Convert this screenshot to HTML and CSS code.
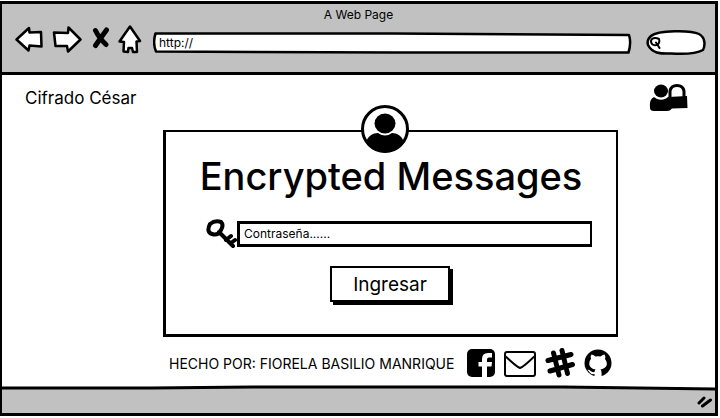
FILE: index.html
```html
<!DOCTYPE html>
<html lang="es">
<head>
<meta charset="utf-8">
<meta name="viewport" content="width=device-width, initial-scale=1">
<title>A Web Page</title>
<link rel="stylesheet" href="styles.css">
</head>
<body>
<div class="window">
  <header class="chrome">
    <p class="chrome-title">A Web Page</p>
    <div class="toolbar">
      <button class="tool" type="button" aria-label="Back">
        <svg width="28" height="28" viewBox="0 0 28 28"><path class="sketch" d="M1.500 13.500 L14 2 L14.500 6.500 L26 6 L26.500 20.500 L14.500 19.500 L13.500 24.500 Z"/></svg>
      </button>
      <button class="tool" type="button" aria-label="Forward">
        <svg width="30" height="28" viewBox="0 0 30 28"><path class="sketch" d="M28.500 13.500 L16.500 1.500 L16 7 L2 6.500 L3.500 20 L15 20 L16 25.500 Z"/></svg>
      </button>
      <button class="tool" type="button" aria-label="Stop">
        <svg width="18" height="28" viewBox="0 0 18 28"><path class="cross" d="M4.500 4.500 Q8 12 15 18.500 M15.500 4 L9 13 L4.500 19.500"/></svg>
      </button>
      <button class="tool" type="button" aria-label="Home">
        <svg width="24" height="30" viewBox="0 0 24 30"><path class="sketch" d="M12 1.500 L22 16 L18.500 16.500 L19 27 L15 27 L14 23 L10.500 23 L10 27 L5.500 26.500 L6 17 L1.500 16.500 Z"/></svg>
      </button>
      <div class="address">
        <svg class="outline" viewBox="0 0 480 24" preserveAspectRatio="none" aria-hidden="true"><path class="sketch" d="M2.500 2.500 L240 2.500 L477 4 Q479.500 12 476.500 21.500 L240 21.500 L3 20.500 Q-0.500 12 2.500 2.500 Z"/></svg>
        <input class="address-input" type="text" value="http://" aria-label="Address">
      </div>
      <div class="search">
        <svg class="outline" viewBox="0 0 60 28" preserveAspectRatio="none" aria-hidden="true"><path class="sketch" d="M5 7 C12 1 45 1 53 5 C60 9 59 17 57 21 C48 26 33 25 25 24.500 C14 25 6 24 2 16 Q0.500 11 5 7 Z"/></svg>
        <svg class="lens" width="12" height="12" viewBox="0 0 12 12" aria-hidden="true"><path class="stroke" d="M2 2 Q5 0 9 2 Q10 5 8 7.500 Q4 9 2 7 Q0 4 2 2 M6 5.500 L9.500 11"/></svg>
        <input class="search-input" type="search" aria-label="Search">
      </div>
    </div>
  </header>
  <nav class="topbar">
    <a class="brand" href="#">Cifrado César</a>
    <a class="icon-link" href="#" aria-label="Cuenta">
      <svg width="40" height="28" viewBox="0 0 40 28"><path d="M5 13 C8 16 15 17 19 13 L38 12 L38.500 24 L23 24.500 Q21 27 18 27 L5 27 Q1 27 1 24 Q0 15 5 13 Z"/><ellipse cx="12" cy="7" rx="7" ry="6.500"/><path class="shackle" d="M21 14 V7 Q22 1.500 28 1.500 Q34 1.500 35 7 V14"/></svg>
    </a>
  </nav>
  <main class="content">
    <section class="card">
      <svg class="avatar" width="48" height="48" viewBox="0 0 48 48" aria-hidden="true"><circle class="ring" cx="24" cy="24" r="22.500"/><path d="M5 37 C7 31 12 28 17 28 Q24 33 31 28 C36 28 41 31 43 37 C33 51 15 51 5 37 Z"/><ellipse cx="24" cy="18.500" rx="10.500" ry="10"/></svg>
      <h1 class="heading">Encrypted Messages</h1>
      <form class="login">
        <div class="field">
          <label for="password"><svg width="31" height="30" viewBox="0 0 31 30" role="img" aria-label="Contraseña"><path class="key" d="M4 5 Q9 1 15 3 Q18 6 15 11 Q12 17 6 15 Q0 13 4 5 Z M13 13 L27 27 M20 21 L25 17 M25 24 L29 21"/></svg></label>
          <input class="password" id="password" type="text" placeholder="Contraseña......">
        </div>
        <button class="submit" type="button">Ingresar</button>
      </form>
    </section>
    <div class="credits">
      <p class="author">HECHO POR: FIORELA BASILIO MANRIQUE</p>
      <a class="icon-link" href="#" aria-label="Facebook"><svg width="28" height="28" viewBox="0 0 28 28"><rect width="28" height="28" rx="5"/><path class="knock" d="M15 28 V17.500 H11.500 V13 H15 V10 Q15 4 21 4 H25 V8.500 H22 Q20 8.500 20 10.500 V13 H25 L24.500 17.500 H20 V28 Z"/></svg></a>
      <a class="icon-link" href="#" aria-label="Correo"><svg width="32" height="28" viewBox="0 0 32 28"><rect class="stroke" x="1" y="3" width="30" height="24" rx="2"/><path class="stroke" d="M1 7 C6 11 10 16 16 19 C21 17 26 11 31 7"/></svg></a>
      <a class="icon-link" href="#" aria-label="Slack"><svg width="30" height="30" viewBox="0 0 30 30"><path class="hash-line" d="M8.500 5 L14 27 M17 2.500 L22.500 25.500 M3 12.500 L26 6.500 M5 23 L27.500 16.500"/></svg></a>
      <a class="icon-link" href="#" aria-label="GitHub"><svg width="28" height="28" viewBox="0 0 28 28"><circle cx="14" cy="14" r="13.500"/><path class="knock" d="M10.500 28 V25 C6 26 5.500 22 3.500 21 C6 20 7 24 10.500 23 Q10.500 21.500 11.500 20.500 C3 19 5 12 7 10 Q6 7 7.500 5.500 Q9 5.500 11.500 7.500 Q14 7 16.500 7.500 Q19 5.500 20.500 5.500 Q22 8 21 10 C24 14 24 19 16.500 20.500 Q18 22 17.500 28 Z"/></svg></a>
    </div>
  </main>
  <footer class="status">
    <svg class="edge" viewBox="0 0 712 6" preserveAspectRatio="none" aria-hidden="true"><path class="fill" d="M0 3 L250 2 L560 2 L712 4 V6 H0 Z"/><path class="line" d="M0 3 L150 3 L250 2 L560 2 L712 4"/></svg>
    <svg class="grip" width="18" height="14" viewBox="0 0 18 14" aria-hidden="true"><path d="M3 7 L8 2 M6.500 10 L14.500 4"/></svg>
  </footer>
</div>
</body>
</html>
```
FILE: styles.css
```css
* {
  box-sizing: border-box;
}

body {
  margin: 0;
  padding: 1px 2px 2px 0;
  background: #fff;
  color: #000;
  font-family: Inter, Lato, sans-serif;
  font-size: 12px;
}

h1,
p {
  margin: 0;
  font-weight: 400;
}

svg {
  display: block;
}

button,
input {
  font: inherit;
  color: inherit;
}

.window {
  display: flex;
  flex-direction: column;
  min-height: calc(100vh - 3px);
  border: 3px solid #000;
  border-left-width: 2px;
}

.chrome {
  padding: 2px 9px 16px 13px;
  background: #c1c1c1;
  border-bottom: 3px solid #000;
}

.chrome-title {
  line-height: 18px;
  padding-right: 4px;
  text-align: center;
}

.toolbar {
  display: flex;
  align-items: center;
  height: 32px;
  gap: 9px;
}

.tool {
  padding: 0;
  border: 0;
  background: none;
}

.address,
.search {
  position: relative;
  display: flex;
  align-items: center;
}

.address {
  flex: 1;
  height: 24px;
  margin: 6px 5px 0 2px;
}

.search {
  width: 60px;
  height: 28px;
  margin-top: 6px;
}

.outline {
  position: absolute;
  inset: 0;
  width: 100%;
  height: 100%;
}

.address-input,
.search-input {
  position: relative;
  width: 100%;
  padding: 0 6px 2px;
  border: 0;
  background: none;
  outline: 0;
  appearance: none;
}

.search-input {
  min-width: 0;
  padding: 0 4px;
}

.lens {
  position: relative;
  flex: none;
  margin-left: 4px;
}

.sketch {
  fill: #fff;
  stroke: #000;
  stroke-width: 2.5;
  stroke-linejoin: round;
}

.stroke,
.shackle,
.key,
.ring,
.cross {
  fill: none;
  stroke: #000;
  stroke-width: 2;
  stroke-linecap: round;
  stroke-linejoin: round;
}

.shackle {
  stroke-width: 3;
}

.key {
  stroke-width: 4;
}

.cross {
  stroke-width: 5;
}

.ring {
  fill: #fff;
  stroke-width: 3;
}

.knock {
  fill: #fff;
}

.hash-line {
  fill: none;
  stroke: #000;
  stroke-width: 5;
  stroke-linecap: round;
}

.topbar {
  display: flex;
  align-items: center;
  justify-content: space-between;
  height: 55px;
  padding: 0 26px 10px 23px;
}

.brand {
  color: inherit;
  font-size: 17px;
  text-decoration: none;
}

.icon-link {
  color: inherit;
}

.content {
  display: grid;
  flex: 1;
  grid-template-columns: 161fr 455fr 97fr;
  align-content: start;
}

.card {
  position: relative;
  grid-column: 2;
  padding: 18px 24px 32px 40px;
  border: 3px solid #000;
  border-width: 2px 2px 3px 3px;
}

.avatar {
  position: absolute;
  top: -27px;
  left: calc(50% - 30px);
}

.heading {
  margin: 0 -16px 0 -32px;
  font-size: 38px;
  font-weight: 500;
  line-height: 52px;
  text-align: center;
  white-space: nowrap;
}

.login {
  display: flex;
  flex-direction: column;
  align-items: center;
  gap: 17px;
  padding-top: 17px;
}

.field {
  display: flex;
  align-items: center;
  width: 100%;
}

.password {
  flex: 1;
  min-width: 0;
  height: 26px;
  padding: 0 4px 2px;
  border: 3px solid #000;
  border-right-width: 2px;
  border-radius: 0;
  background: #fff;
}

.password::placeholder {
  color: #000;
  opacity: 1;
}

.submit {
  width: 120px;
  height: 36px;
  margin-right: 18px;
  padding: 0;
  border: 2px solid #000;
  background: #fff;
  box-shadow: 3px 3px 0 #000;
  font-size: 19px;
}

.credits {
  display: flex;
  grid-column: 2;
  align-items: center;
  gap: 9px;
  padding: 11px 6px 0;
}

.author {
  flex: 1;
  font-size: 14px;
  white-space: nowrap;
}

.status {
  display: flex;
  flex-direction: column;
  align-items: flex-end;
  justify-content: space-between;
  height: 28px;
  background: linear-gradient(transparent 4px, #c1c1c1 4px);
}

.edge {
  width: 100%;
  height: 6px;
}

.fill {
  fill: #c1c1c1;
}

.line {
  fill: none;
  stroke: #000;
  stroke-width: 3;
}

.grip {
  margin: 0 1px 3px;
  fill: none;
  stroke: #000;
  stroke-width: 3;
  stroke-linecap: round;
}
```
